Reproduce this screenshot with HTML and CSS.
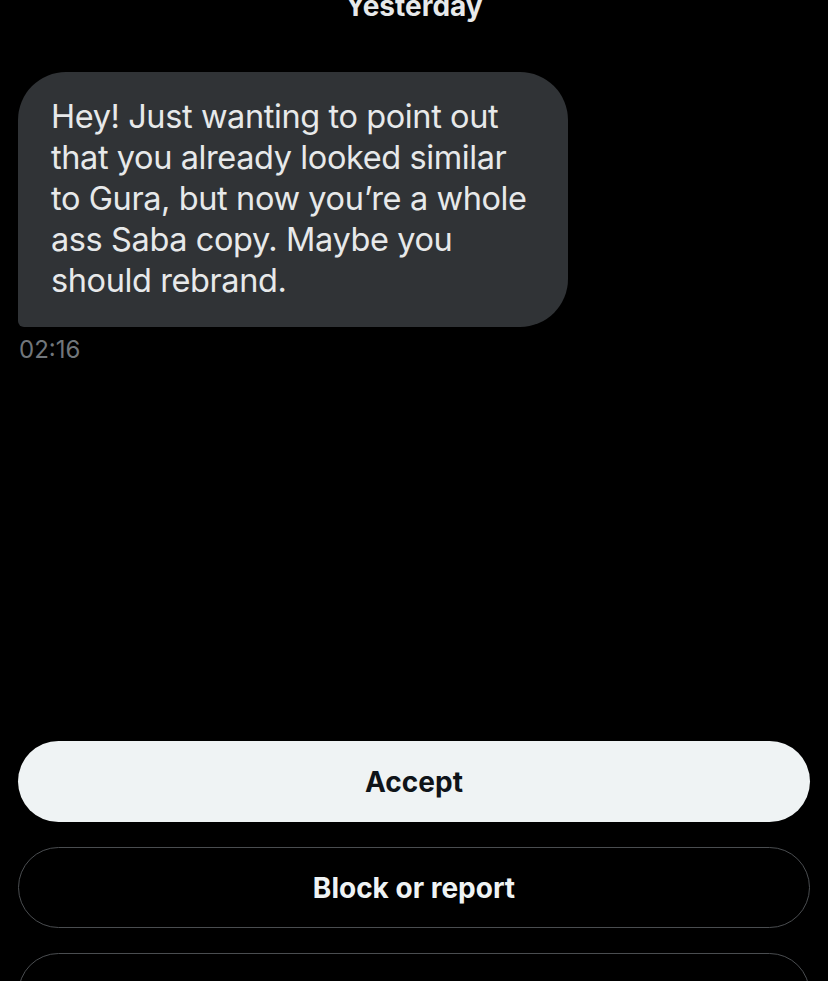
FILE: index.html
```html
<!DOCTYPE html>
<html lang="en">
   <head>
      <meta charset="UTF-8">
      <meta name="viewport" content="width=device-width, initial-scale=1.0">
      <link rel="stylesheet" href="styles.css">
      <title>Message request</title>
   </head>
   <body>
      <div class="chat">
         <div class="day">Yesterday</div>
         <div class="msg">
            <div class="bubble">Hey! Just wanting to point out that you already looked similar to Gura, but now you’re a whole ass Saba copy. Maybe you should rebrand.</div>
            <div class="time">02:16</div>
         </div>
      </div>
      <div class="actions">
         <button class="btn accept">Accept</button>
         <button class="btn outline">Block or report</button>
         <button class="btn outline">Delete</button>
      </div>
   </body>
</html>
```

FILE: styles.css
```css
body {
margin: 0;
background: #000;
color: #e7e9ea;
font-family: Inter, "Noto Sans", sans-serif;
height: 981px;
overflow: hidden;
}
.chat {
padding: 0 18px;
}
.day {
text-align: center;
font-weight: 700;
font-size: 28px;
line-height: 28px;
margin-top: -8px;
}
.msg {
margin-top: 52px;
}
.bubble {
width: 484px;
background: #303336;
border-radius: 48px 48px 48px 6px;
padding: 24px 33px 26px 33px;
font-size: 32.5px;
line-height: 41px;
letter-spacing: -0.4px;
color: #e7e9ea;
}
.time {
margin-top: 8px;
padding-left: 1px;
font-size: 24px;
line-height: 30px;
color: #71767b;
}
.actions {
display: flex;
flex-direction: column;
gap: 25px;
padding: 0 18px;
margin-top: 376px;
}
.btn {
height: 81px;
border-radius: 41px;
font-family: Inter, "Noto Sans", sans-serif;
font-size: 28px;
font-weight: 700;
cursor: pointer;
}
.accept {
background: #eff3f4;
color: #0f1419;
border: none;
}
.outline {
background: #000;
color: #eff3f4;
border: 1.5px solid #4a4d50;
}
```
